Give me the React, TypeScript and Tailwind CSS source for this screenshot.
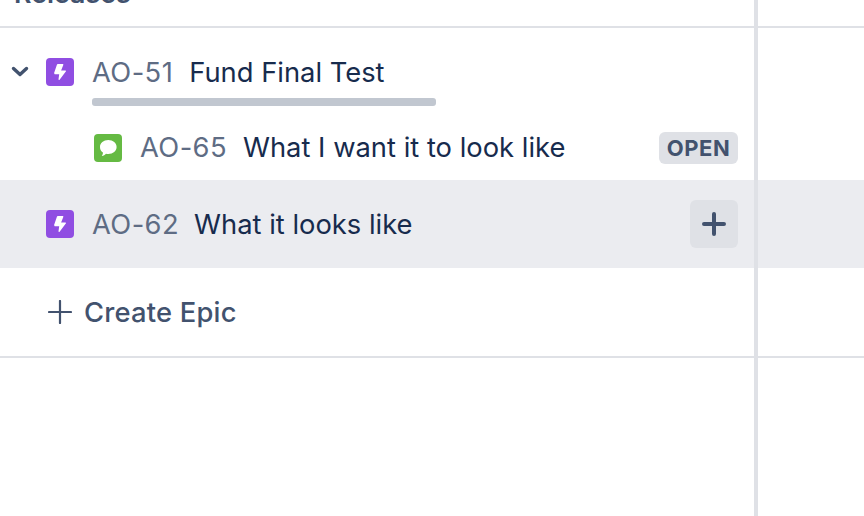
function EpicIcon() {
  return (
    <div className="w-7 h-7 rounded-[4px] bg-[#904ee2] shrink-0">
      <svg width="28" height="28" viewBox="0 0 28 28" fill="none">
        <path d="M11 6.6C11.1 6.2 11.4 6 11.8 6H16.6C17.2 6 17.5 6.4 17.3 6.9L15.1 12.4H19.2C19.9 12.4 20.3 13.1 19.8 13.6L13.6 21.7C13.1 22.3 12.4 21.9 12.5 21.2L13.2 16.2H8.8C8.2 16.2 7.9 15.8 8 15.3Z" fill="#fff" />
      </svg>
    </div>
  );
}

function StoryIcon() {
  return (
    <div className="w-7 h-7 rounded-[4px] bg-[#65ba43] shrink-0">
      <svg width="28" height="28" viewBox="0 0 28 28" fill="none">
        <path d="M14.3 6C19 6 22.6 9 22.6 13C22.6 17 19 20 14.3 20C13.5 20 12.8 19.9 12 19.8C11 21 9.5 21.8 7.8 22C8.6 21 9 19.8 8.9 18.6C7 17.3 6 15.3 6 13C6 9 9.6 6 14.3 6Z" fill="#fff" />
      </svg>
    </div>
  );
}

export default function App() {
  return (
    <div
      className="relative w-[864px] h-[516px] overflow-hidden bg-white text-[27.35px] text-[#172b4d]"
      style={{ fontFamily: "Inter, sans-serif" }}
    >
      {/* Releases header, cut off by the top of the window */}
      <div className="h-[28px] border-b-2 border-[#dfe1e6] overflow-hidden">
        <div className="-mt-[27px] pl-[14px] text-[26.8px] font-semibold text-[#42526e] leading-[40px]">Releases</div>
      </div>

      {/* AO-51 */}
      <div className="h-[76px] flex pl-[10px]">
        <div className="w-[20px] h-[12px] mt-[38px] flex items-center justify-center">
          <svg width="20" height="12" viewBox="0 0 20 12" fill="none">
            <path d="M3.5 2.5L10 8.5L16.5 2.5" stroke="#42526e" strokeWidth="3.4" strokeLinecap="round" strokeLinejoin="round" />
          </svg>
        </div>
        <div className="ml-[16px] mt-[30px]"><EpicIcon /></div>
        <div className="ml-[18px] mt-[24px] w-[344px]">
          <div className="flex items-center h-[40px]">
            <span className="text-[#5e6c84] tracking-[0.4px]">AO-51</span>
            <span className="ml-[16px]">Fund Final Test</span>
          </div>
          <div className="h-2 mt-[6px] rounded-[3px] bg-[#c1c7d0]" />
        </div>
      </div>

      {/* AO-65 */}
      <div className="h-[76px] flex items-center pt-[12px] pl-[94px] pr-[126px]">
        <StoryIcon />
        <span className="ml-[18px] text-[#5e6c84] tracking-[0.4px]">AO-65</span>
        <span className="ml-[16px]">What I want it to look like</span>
        <span className="ml-auto h-8 w-[79px] rounded-[6px] bg-[#dfe1e6] flex items-center justify-center text-[22px] font-bold tracking-[0.5px] text-[#42526e]">
          OPEN
        </span>
      </div>

      {/* AO-62 */}
      <div className="h-[88px] flex items-center pl-[46px] pr-[126px] bg-[#ebecf0]">
        <EpicIcon />
        <span className="ml-[18px] mt-[2px] text-[#5e6c84] tracking-[0.4px]">AO-62</span>
        <span className="ml-[15px] mt-[2px]">What it looks like</span>
        <div className="ml-auto w-12 h-12 rounded-[6px] bg-[#dfe1e6] flex items-center justify-center">
          <svg width="24" height="24" viewBox="0 0 24 24" fill="none">
            <path d="M12 2V22M2 12H22" stroke="#42526e" strokeWidth="4" strokeLinecap="round" />
          </svg>
        </div>
      </div>

      {/* Create Epic */}
      <div className="h-[90px] flex items-center pl-[48px] border-b-2 border-[#dfe1e6] font-[550] text-[#42526e]">
        <svg width="24" height="24" viewBox="0 0 24 24" fill="none" className="shrink-0">
          <path d="M12 1V23M1 12H23" stroke="#42526e" strokeWidth="2.2" strokeLinecap="round" />
        </svg>
        <span className="ml-[12px] mt-[2px] tracking-[0.2px]">Create Epic</span>
      </div>

      {/* column divider drawn over the rows */}
      <div className="absolute top-0 bottom-0 left-[754px] w-1 bg-[#dfe1e6]" />
    </div>
  );
}
